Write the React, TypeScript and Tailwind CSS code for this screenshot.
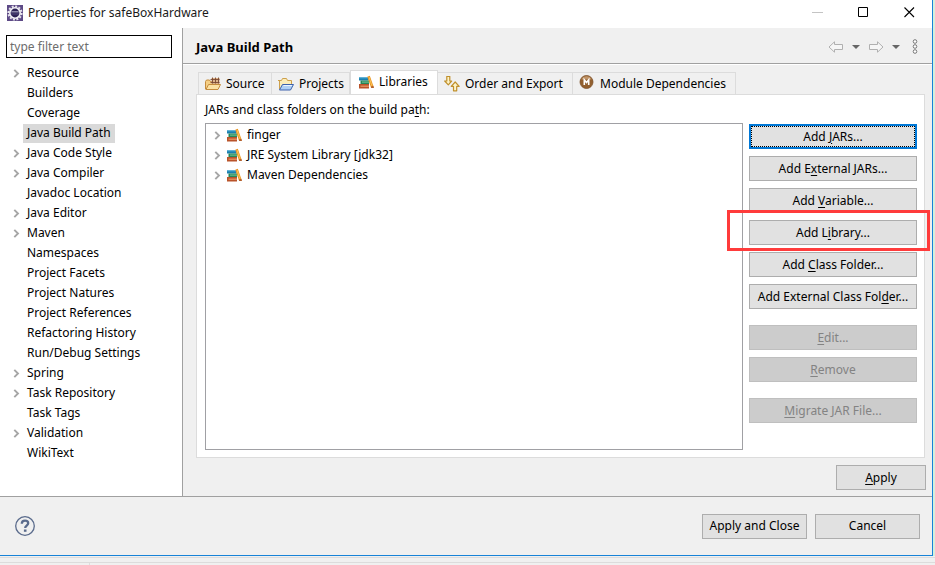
import React, { useState } from 'react';

interface TreeItem {
  label: string;
  expandable?: boolean;
}

interface TabItem {
  label: string;
  icon: React.ReactNode;
  width: string;
}

const pages: TreeItem[] = [
  { label: 'Resource', expandable: true },
  { label: 'Builders' },
  { label: 'Coverage' },
  { label: 'Java Build Path' },
  { label: 'Java Code Style', expandable: true },
  { label: 'Java Compiler', expandable: true },
  { label: 'Javadoc Location' },
  { label: 'Java Editor', expandable: true },
  { label: 'Maven', expandable: true },
  { label: 'Namespaces' },
  { label: 'Project Facets' },
  { label: 'Project Natures' },
  { label: 'Project References' },
  { label: 'Refactoring History' },
  { label: 'Run/Debug Settings' },
  { label: 'Spring', expandable: true },
  { label: 'Task Repository', expandable: true },
  { label: 'Task Tags' },
  { label: 'Validation', expandable: true },
  { label: 'WikiText' },
];

const libraries = ['finger', 'JRE System Library [jdk32]', 'Maven Dependencies'];

const EclipseIcon = () => (
  <svg className="h-4 w-4 shrink-0" viewBox="0 0 16 16">
    <rect width="16" height="16" fill="#5d4a86" />
    <circle cx="8" cy="8" r="6.6" fill="none" stroke="#e6e4ec" strokeWidth="2" strokeDasharray="2 1.45" />
    <circle cx="8" cy="8" r="5.2" fill="#2c2255" stroke="#f4f3f7" strokeWidth="1.6" />
    <path d="M4.200 6h7.600v1.500H4.200z" fill="#8a86a8" />
    <path d="M4 9h8" stroke="#5f588c" strokeWidth="0.8" />
  </svg>
);

const Chevron = () => (
  <svg className="h-[9px] w-[7px] shrink-0" viewBox="0 0 7 9" fill="none">
    <path d="M1.3 0.8 5 4.5 1.3 8.2" stroke="#a6a6a6" strokeWidth="1.9" />
  </svg>
);

const BooksIcon = () => (
  <svg className="h-4 w-4 shrink-0" viewBox="0 0 16 16">
    <path d="M1 3.500h9.500v3H1z" fill="#1a7fae" />
    <path d="M1 3.500h9v1H1z" fill="#3aa3cf" />
    <path d="M2.500 6.500H11v3.500H2.500z" fill="#25875a" />
    <path d="M4 7.500h7v1.200H4z" fill="#6dbb90" />
    <path d="M1 10h10v4.500H1z" fill="#b9532a" />
    <path d="M2.500 11.500H11v1.500H2.500z" fill="#e08a58" />
    <path d="m9.300 2.700 2.500-.9 3.700 10.700-2.500 1z" fill="#e8931f" />
    <path d="m10.500 3.300 1-.4 3 8.800-1 .4z" fill="#fac45c" />
    <path d="m12.800 12.800 2.600-1 .6 2.200h-2.800z" fill="#b4602c" />
  </svg>
);

const SourceIcon = () => (
  <svg className="h-4 w-4 shrink-0" viewBox="0 0 16 16">
    <path d="M.5 13V5.500l1-1.500h3l1 1.500H13v7.500z" fill="#f5cf85" stroke="#c58c3e" />
    <path d="M6.500 2h8v6h-8z" fill="#dcb388" />
    <path d="M5.500 3.500h9M5.500 6.500h9M7.500 1.500v6M10.500 1.500v6M13.500 1.500v6" stroke="#7a4a32" strokeWidth="0.9" />
    <path d="M3.500 8.500h12L13 13.500H1z" fill="#fbe2a4" stroke="#c58c3e" strokeLinejoin="round" />
  </svg>
);

const ProjectsIcon = () => (
  <svg className="h-4 w-4 shrink-0" viewBox="0 0 16 16">
    <path d="M1.500 13V4.500h2l1-2h4l1 2h4V8" fill="#fcedb9" stroke="#cda04c" />
    <path d="M0 4.500h2" stroke="#cda04c" />
    <path d="M4.500 8.500h11L12.500 14H1.500z" fill="#b0d0f5" stroke="#3e63ad" strokeLinejoin="round" />
    <path d="M5.500 9.500h8.500" stroke="#eaf4ff" />
  </svg>
);

const OrderIcon = () => (
  <svg className="h-4 w-4 shrink-0" viewBox="0 0 16 16" fill="#fdf3c8" stroke="#c0902c" strokeWidth="1.200" strokeLinejoin="round">
    <path d="M2.800.5h3V5h1.900L4.300 8.800.7 5h2.100z" />
    <path d="M9.500 14.800h3.200v-4.500h2.500L11.200 6 7.200 10.300h2.300z" />
  </svg>
);

const ModuleIcon = () => (
  <svg className="mb-[3px] h-4 w-4 shrink-0" viewBox="0 0 16 16">
    <circle cx="7.500" cy="8" r="6.500" fill="#92602f" stroke="#7d5028" strokeWidth="0.8" />
    <path d="M2.500 5.500a5.500 5.500 0 0 1 10 0z" fill="#c09468" />
    <path d="M5.300 11V5.800l2.200 2.700 2.200-2.700V11" fill="none" stroke="#fff" strokeWidth="1.600" />
  </svg>
);

const tabs: TabItem[] = [
  { label: 'Source', icon: <SourceIcon />, width: 'w-[74px]' },
  { label: 'Projects', icon: <ProjectsIcon />, width: 'w-[78px]' },
  { label: 'Libraries', icon: <BooksIcon />, width: 'w-[88px]' },
  { label: 'Order and Export', icon: <OrderIcon />, width: 'w-[135px]' },
  { label: 'Module Dependencies', icon: <ModuleIcon />, width: 'w-[163px]' },
];

interface PushButtonProps {
  // The character after "&" is the mnemonic
  label: string;
  className?: string;
  disabled?: boolean;
  focused?: boolean;
}

const PushButton: React.FC<PushButtonProps> = ({ label, className = '', disabled, focused }) => {
  const at = label.indexOf('&');
  const look = disabled
    ? 'border border-[#bfbfbf] bg-[#cccccc] text-[#838383]'
    : focused
      ? 'border-2 border-[#0078d7] bg-[#e1e1e1]'
      : 'border border-[#adadad] bg-[#e1e1e1]';

  return (
    <button
      disabled={disabled}
      className={`flex h-[25px] shrink-0 items-center justify-center whitespace-nowrap ${look} ${className}`}
    >
      <span
        className={`flex h-full w-full items-center justify-center ${focused ? 'border border-dotted border-black' : ''}`}
      >
        {at < 0 ? (
          label
        ) : (
          <span>
            {label.slice(0, at)}
            <u className="underline-offset-2">{label[at + 1]}</u>
            {label.slice(at + 2)}
          </span>
        )}
      </span>
    </button>
  );
};

const TitleBar = () => (
  <header className="flex h-7 shrink-0 items-center bg-white pb-[3px] pl-[7px]">
    <EclipseIcon />
    <h1 className="ml-[5px] flex-1 text-[#1a1a1a]">Properties for safeBoxHardware</h1>
    <button aria-label="Minimize" className="flex h-6 w-[46px] items-center justify-center">
      <svg className="h-[11px] w-[11px]" viewBox="0 0 11 11">
        <path d="M0 5.500h11" stroke="#c4c4c4" />
      </svg>
    </button>
    <button aria-label="Maximize" className="flex h-6 w-[46px] items-center justify-center">
      <svg className="h-[11px] w-[11px]" viewBox="0 0 11 11">
        <path d="M.5.5h9v9h-9z" fill="none" stroke="#000" />
      </svg>
    </button>
    <button aria-label="Close" className="flex h-6 w-[46px] items-center justify-center">
      <svg className="h-[11px] w-[11px]" viewBox="0 0 11 11">
        <path d="m.5.5 9.500 9.500M10 .5.5 10" stroke="#000" strokeWidth="1.100" />
      </svg>
    </button>
  </header>
);

const NavToolbar = () => (
  <div className="flex items-center">
    <button aria-label="Back">
      <svg className="h-3 w-4" viewBox="0 0 16 12">
        <path d="M1 6 6.500.8V3.500H14.500v5H6.500v2.700z" fill="#f6f6f6" stroke="#b0b0b0" />
      </svg>
    </button>
    <button aria-label="Back history" className="ml-2">
      <svg className="h-1 w-2" viewBox="0 0 8 4">
        <path d="M0 0h8L4 4z" fill="#666" />
      </svg>
    </button>
    <button aria-label="Forward" className="ml-2">
      <svg className="h-3 w-4" viewBox="0 0 16 12">
        <path d="M15 6 9.500.8V3.500H1.500v5h8v2.700z" fill="#f6f6f6" stroke="#b0b0b0" />
      </svg>
    </button>
    <button aria-label="Forward history" className="ml-2">
      <svg className="h-1 w-2" viewBox="0 0 8 4">
        <path d="M0 0h8L4 4z" fill="#666" />
      </svg>
    </button>
    <button aria-label="View menu" className="ml-3">
      <svg className="h-[15px] w-[6px]" viewBox="0 0 6 15" fill="#fff" stroke="#777">
        <circle cx="3" cy="2.500" r="1.800" />
        <circle cx="3" cy="7.500" r="1.800" />
        <circle cx="3" cy="12.500" r="1.800" />
      </svg>
    </button>
  </div>
);

const PageTree: React.FC<{ selected: string; onSelect: (label: string) => void }> = ({ selected, onSelect }) => (
  <nav className="w-[183px] shrink-0 border-r border-[#a0a0a0] bg-white pt-[7px]">
    <input
      type="text"
      aria-label="Filter pages"
      placeholder="type filter text"
      className="ml-[6px] block h-[23px] w-[166px] border border-black px-[3px] outline-none placeholder:text-[#6d6d6d]"
    />
    <ul className="mt-[5px]">
      {pages.map(page => (
        <li key={page.label} className="flex h-5 items-center pl-[13px]">
          <span className="w-[10px]">{page.expandable && <Chevron />}</span>
          <button
            onClick={() => onSelect(page.label)}
            className={`h-[19px] px-1 ${page.label === selected ? 'bg-[#d9d9d9]' : ''}`}
          >
            {page.label}
          </button>
        </li>
      ))}
    </ul>
  </nav>
);

const LibrariesPane = () => (
  <section className="mr-[7px] ml-[13px] flex flex-1 flex-col border border-[#dcdcdc] bg-white pt-[5px] pr-[7px] pb-[7px] pl-2">
    <h3 className="h-5 leading-5">
      JARs and class folders on the build pa<u className="underline-offset-2">t</u>h:
    </h3>
    <div className="mt-[3px] flex flex-1 gap-[6px]">
      <ul className="flex-1 border border-[#a0a0a4] pt-px">
        {libraries.map(library => (
          <li key={library} className="flex h-5 items-center pl-2">
            <Chevron />
            <span className="mx-[5px]">
              <BooksIcon />
            </span>
            {library}
          </li>
        ))}
      </ul>
      <div className="flex w-[168px] flex-col gap-[7px] pt-px">
        <PushButton label="Add &JARs..." focused />
        <PushButton label="Add E&xternal JARs..." />
        <PushButton label="Add &Variable..." />
        <div className="relative flex flex-col">
          <PushButton label="Add L&ibrary..." />
          <div className="pointer-events-none absolute -top-[10px] -right-[13px] -bottom-[6px] -left-[22px] z-10 border-3 border-[#ff3b3b]" />
        </div>
        <PushButton label="Add &Class Folder..." />
        <PushButton label="Add External Class Fol&der..." />
        <PushButton label="&Edit..." className="mt-[9px]" disabled />
        <PushButton label="&Remove" disabled />
        <PushButton label="&Migrate JAR File..." className="mt-[9px]" disabled />
      </div>
    </div>
  </section>
);

const App: React.FC = () => {
  const [page, setPage] = useState('Java Build Path');
  const [tab, setTab] = useState('Libraries');

  return (
    <div className="flex min-h-screen flex-col bg-[#f0f0f0] font-['Noto_Sans',sans-serif] text-[12px] leading-4 text-black">
      <div className="flex flex-1 flex-col border-r-2 border-[#d5f0dc]">
        <div className="flex flex-1 flex-col border-r border-b border-[#1883d7]">
          <TitleBar />
          <div className="flex flex-1">
            <PageTree selected={page} onSelect={setPage} />
            <main className="flex flex-1 flex-col">
              <div className="flex h-9 items-center justify-between border-b border-[#a0a0a0] pt-[2px] pr-[14px] pl-[13px]">
                <h2 className="text-[13px] font-bold">{page}</h2>
                <NavToolbar />
              </div>
              <div className="flex items-end border-t border-white pt-[5px] pl-[15px]">
                {tabs.map(item => (
                  <button
                    key={item.label}
                    onClick={() => setTab(item.label)}
                    className={`flex items-center gap-[5px] whitespace-nowrap border-[#dcdcdc] ${item.width} ${
                      item.label === tab
                        ? '-mb-px h-[25px] border-x border-t bg-white pb-[2px] pl-[7px]'
                        : 'h-[22px] border-t border-r pl-[6px] first:border-l'
                    }`}
                  >
                    {item.icon}
                    {item.label}
                  </button>
                ))}
              </div>
              <LibrariesPane />
              <div className="flex justify-end pt-[7px] pr-[6px] pb-[6px]">
                <PushButton label="&Apply" className="w-[90px]" />
              </div>
            </main>
          </div>
          <footer className="flex h-[59px] items-center gap-2 border-t border-[#a0a0a0] pr-3 pl-[15px]">
            <button aria-label="Help" className="mr-auto">
              <svg className="h-5 w-5" viewBox="0 0 20 20" fill="none" stroke="#5a6b8c">
                <circle cx="10" cy="10" r="9.300" strokeWidth="1.300" />
                <path d="M6.800 7.800c0-2 1.400-3.100 3.200-3.100s3.200 1 3.200 2.600c0 2.200-3 2.400-3 4.700" strokeWidth="2.300" />
                <path d="M10.200 13.500v2.300" strokeWidth="2.600" />
              </svg>
            </button>
            <PushButton label="Apply and Close" className="w-[105px]" />
            <PushButton label="Cancel" className="w-[105px]" />
          </footer>
        </div>
      </div>
      <div className="mt-px flex h-2 flex-col border-t border-[#dcdcdc]">
        <div className="mt-1 flex-1 border-t border-[#dcdcdc]">
          <div className="h-full w-[90px] border-r border-[#dcdcdc]" />
        </div>
      </div>
    </div>
  );
};

export default App;
